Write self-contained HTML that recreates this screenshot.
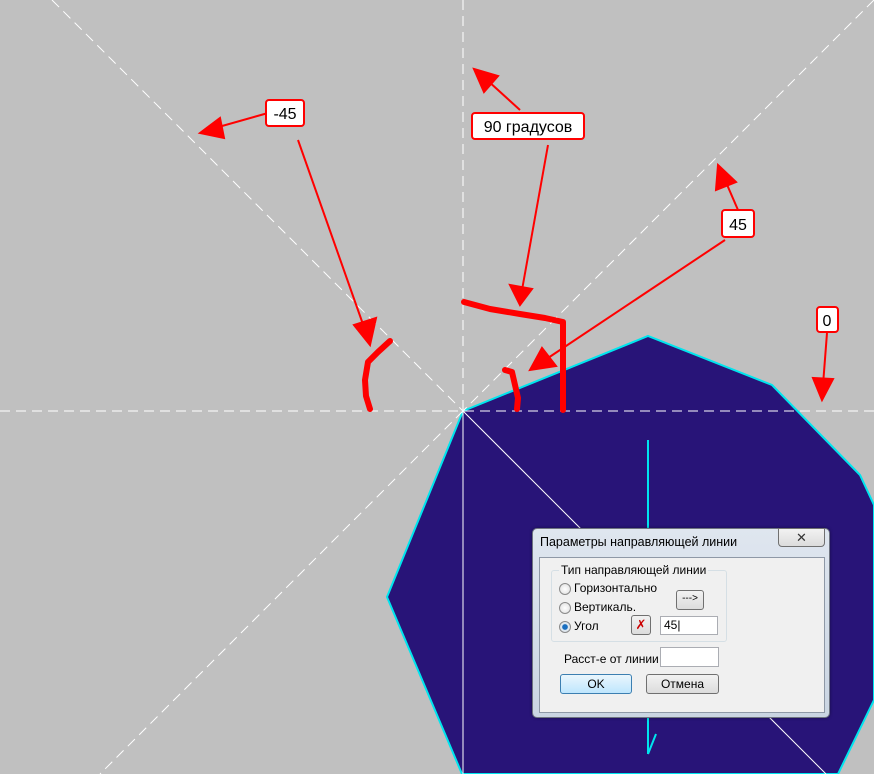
<!DOCTYPE html>
<html><head><meta charset="utf-8"><style>
body{margin:0;width:874px;height:774px;overflow:hidden;background:#c0c0c0;font-family:"Liberation Sans",sans-serif;position:relative}
svg{position:absolute;left:0;top:0}
.dlg{position:absolute;left:532px;top:528px;width:296px;height:188px;border:1px solid #6e7480;border-radius:5px;background:linear-gradient(#dfe6ef,#cad5e2);box-shadow:0 0 3px rgba(0,0,0,.4)}
.in{position:absolute;left:6px;top:28px;width:284px;height:154px;background:#f0f0f0;border:1px solid #8e98a6}
.t{position:absolute;font-size:12px;color:#000;white-space:nowrap}
.rb{position:absolute;width:10px;height:10px;border-radius:50%;border:1px solid #8a8a8a;background:radial-gradient(#fff,#ddd)}
.btn{position:absolute;border:1px solid #707070;border-radius:3px;background:linear-gradient(#f2f2f2,#dcdcdc);font-size:12px;text-align:center}
.ed{position:absolute;background:#fff;border:1px solid #abadb3}
</style></head><body>
<svg width="874" height="774">
<polygon points="463,411 648,336 772,385 860,475 874,505 874,700 838,774 462,774 387,597" fill="#281478" stroke="#00e5ee" stroke-width="2"/>
<g stroke="#fff" stroke-width="1" stroke-dasharray="10,6">
<line x1="0" y1="411" x2="874" y2="411"/>
<line x1="463" y1="0" x2="463" y2="411"/>
<line x1="52" y1="0" x2="463" y2="411"/>
<line x1="874" y1="0" x2="463" y2="411"/>
<line x1="463" y1="411" x2="100" y2="774"/>
</g>
<line x1="463" y1="411" x2="463" y2="774" stroke="#fff" stroke-width="1"/>
<line x1="463" y1="411" x2="826" y2="774" stroke="#fff" stroke-width="1"/>
<line x1="648" y1="440" x2="648" y2="530" stroke="#00e5ee" stroke-width="2"/>
<line x1="648" y1="715" x2="648" y2="754" stroke="#00e5ee" stroke-width="2"/>
<line x1="648" y1="754" x2="656" y2="734" stroke="#00e5ee" stroke-width="2"/>
<g stroke="#f00" stroke-width="6" fill="none" stroke-linecap="round" stroke-linejoin="round">
<path d="M464,302 L490,309 L520,314 L545,318 L563,322 L563,410"/>
<path d="M390,341 L378,352 L368,362 L365,380 L366,396 L370,409"/>
<path d="M505,370 L512,372 L515,385 L518,398 L517,409"/>
</g>
<g stroke="#f00" stroke-width="2" fill="#f00">
<line x1="268" y1="113" x2="215" y2="128"/><polygon points="200,133 220,118 224,138"/>
<line x1="298" y1="140" x2="365" y2="330"/><polygon points="370,345 354,325 376,318"/>
<line x1="520" y1="110" x2="487" y2="80"/><polygon points="474,69 498,76 484,92"/>
<line x1="548" y1="145" x2="522" y2="290"/><polygon points="520,305 510,285 532,289"/>
<line x1="738" y1="210" x2="725" y2="180"/><polygon points="718,165 736,182 716,190"/>
<line x1="725" y1="240" x2="545" y2="360"/><polygon points="530,370 542,348 556,366"/>
<line x1="827" y1="333" x2="823" y2="385"/><polygon points="822,400 813,378 833,379"/>
</g>
<g font-family="Liberation Sans" font-size="16" text-anchor="middle">
<rect x="266" y="100" width="38" height="26" rx="3" fill="#fff" stroke="#f00" stroke-width="2"/><text x="285" y="119">-45</text>
<rect x="472" y="113" width="112" height="26" rx="3" fill="#fff" stroke="#f00" stroke-width="2"/><text x="528" y="132">90 градусов</text>
<rect x="722" y="210" width="32" height="27" rx="3" fill="#fff" stroke="#f00" stroke-width="2"/><text x="738" y="230">45</text>
<rect x="817" y="307" width="21" height="25" rx="3" fill="#fff" stroke="#f00" stroke-width="2"/><text x="827" y="326">0</text>
</g>
</svg>
<div class="dlg">
 <div class="t" style="left:7px;top:6px;font-size:12.5px">Параметры направляющей линии</div>
 <div class="btn" style="left:245px;top:-1px;width:45px;height:17px;border-radius:0 0 4px 4px;font-size:13px;color:#333;line-height:17px">✕</div>
 <div class="in">
  <div style="position:absolute;left:11px;top:12px;width:174px;height:70px;border:1px solid #d5dfe5;border-radius:3px"></div>
  <div class="t" style="left:19px;top:5px;background:#f0f0f0;padding:0 2px">Тип направляющей линии</div>
  <div class="rb" style="left:19px;top:25px"></div><div class="t" style="left:34px;top:23px">Горизонтально</div>
  <div class="rb" style="left:19px;top:44px"></div><div class="t" style="left:34px;top:42px">Вертикаль.</div>
  <div class="rb" style="left:19px;top:63px;background:radial-gradient(#1a6fc0 35%,#dfe8f0 45%)"></div><div class="t" style="left:34px;top:61px">Угол</div>
  <div class="btn" style="left:136px;top:32px;width:26px;height:18px;line-height:16px;font-size:10px">---&gt;</div>
  <div class="btn" style="left:91px;top:57px;width:18px;height:18px;line-height:18px;color:#c00;font-size:13px">✗</div>
  <div class="ed" style="left:120px;top:58px;width:56px;height:17px"><span class="t" style="left:3px;top:1px">45|</span></div>
  <div class="t" style="left:24px;top:94px">Расст-е от линии</div>
  <div class="ed" style="left:120px;top:89px;width:57px;height:18px"></div>
  <div class="btn" style="left:20px;top:116px;width:70px;height:18px;line-height:18px;border-color:#3c7fb1;background:linear-gradient(#eaf6fd,#bee6fd)">OK</div>
  <div class="btn" style="left:106px;top:116px;width:71px;height:18px;line-height:18px">Отмена</div>
 </div>
</div>
</body></html>
